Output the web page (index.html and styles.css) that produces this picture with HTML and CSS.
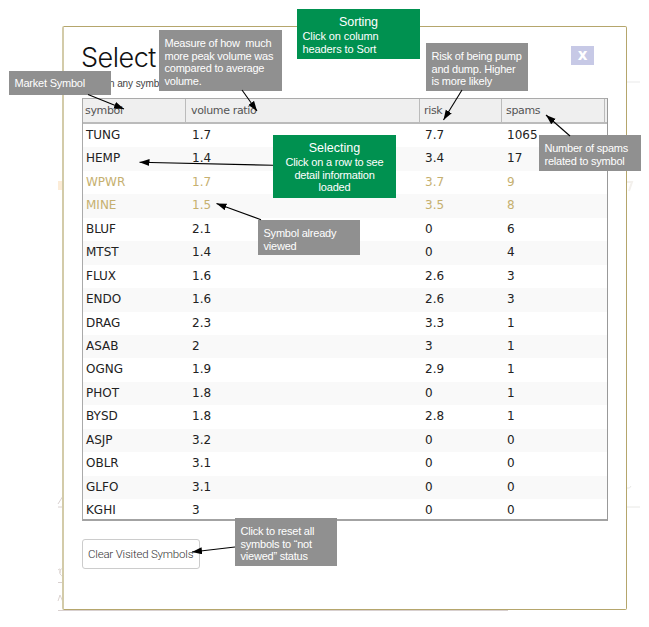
FILE: index.html
```html
<!DOCTYPE html>
<html lang="en">
<head>
<meta charset="utf-8">
<title>Select Symbol</title>
<link rel="stylesheet" href="styles.css">
</head>
<body>
<svg class="backdrop" width="649" height="627" viewBox="0 0 649 627" aria-hidden="true">
  <path d="M627 82H640" stroke="#f4f4f4" stroke-width="2"/>
  <path d="M58 181H63V190H58Z" fill="#fcecd7"/>
  <path d="M627 182H632L629 191" fill="none" stroke="#f3f0ec" stroke-width="2"/>
  <path d="M58 504L63 496M58 507H63M58 582.5H63M58 610.5H508" fill="none" stroke="#d8d0cf"/>
  <path d="M58 570Q61 567 60 573M63 569Q59 568 60 574Q62 577 63 575M58 601L60 595L63 602" fill="none" stroke="#ddd5d2"/>
  <path d="M627 488Q630 489 631 486M627 507H640" fill="none" stroke="#e8e8e5"/>
</svg>
<main class="dialog">
  <header class="dialog-head">
    <h1>Select</h1>
    <button class="close" aria-label="Close">x</button>
  </header>
  <p class="hint">n any symbo</p>
  <section class="table">
    <div class="row head"><span>symbol</span><span>volume ratio</span><span>risk</span><span>spams</span><span></span></div>
    <div class="row"><span>TUNG</span><span>1.7</span><span>7.7</span><span>1065</span></div>
    <div class="row"><span>HEMP</span><span>1.4</span><span>3.4</span><span>17</span></div>
    <div class="row seen"><span>WPWR</span><span>1.7</span><span>3.7</span><span>9</span></div>
    <div class="row seen"><span>MINE</span><span>1.5</span><span>3.5</span><span>8</span></div>
    <div class="row"><span>BLUF</span><span>2.1</span><span>0</span><span>6</span></div>
    <div class="row"><span>MTST</span><span>1.4</span><span>0</span><span>4</span></div>
    <div class="row"><span>FLUX</span><span>1.6</span><span>2.6</span><span>3</span></div>
    <div class="row"><span>ENDO</span><span>1.6</span><span>2.6</span><span>3</span></div>
    <div class="row"><span>DRAG</span><span>2.3</span><span>3.3</span><span>1</span></div>
    <div class="row"><span>ASAB</span><span>2</span><span>3</span><span>1</span></div>
    <div class="row"><span>OGNG</span><span>1.9</span><span>2.9</span><span>1</span></div>
    <div class="row"><span>PHOT</span><span>1.8</span><span>0</span><span>1</span></div>
    <div class="row"><span>BYSD</span><span>1.8</span><span>2.8</span><span>1</span></div>
    <div class="row"><span>ASJP</span><span>3.2</span><span>0</span><span>0</span></div>
    <div class="row"><span>OBLR</span><span>3.1</span><span>0</span><span>0</span></div>
    <div class="row"><span>GLFO</span><span>3.1</span><span>0</span><span>0</span></div>
    <div class="row"><span>KGHI</span><span>3</span><span>0</span><span>0</span></div>
  </section>
  <button class="clear">Clear Visited Symbols</button>
</main>

<aside class="note n-market">Market Symbol</aside>
<aside class="note n-volume">Measure of how&nbsp; much<br>more peak volume was<br>compared to average<br>volume.</aside>
<aside class="note n-risk">Risk of being pump<br>and dump. Higher<br>is more likely</aside>
<aside class="note n-spams">Number of spams<br>related to symbol</aside>
<aside class="note n-viewed">Symbol already<br>viewed</aside>
<aside class="note n-reset">Click to reset all<br>symbols to “not<br>viewed” status</aside>
<aside class="note green n-sort"><h2>Sorting</h2>Click on column<br>headers to Sort</aside>
<aside class="note green n-select"><h2>Selecting</h2>Click on a row to see<br>detail information<br>loaded</aside>

<svg class="arrows" width="649" height="627" viewBox="0 0 649 627" aria-hidden="true">
  <defs>
    <marker id="tip" markerUnits="userSpaceOnUse" markerWidth="11" markerHeight="8" refX="10" refY="3.5" orient="auto">
      <path d="M0 0L10 3.5L0 7Z"/>
    </marker>
  </defs>
  <g fill="none" stroke="#000" stroke-width="1.1">
    <path d="M88 94.5L124 109" marker-end="url(#tip)"/>
    <path d="M242 90L257 111" marker-end="url(#tip)"/>
    <path d="M462 90L443.5 120" marker-end="url(#tip)"/>
    <path d="M570 136L546 115" marker-end="url(#tip)"/>
    <path d="M273 165.3L139.5 162.3" marker-end="url(#tip)"/>
    <path d="M261 219.7L216.5 203.5" marker-end="url(#tip)"/>
    <path d="M235 547L192 552" marker-end="url(#tip)"/>
  </g>
</svg>
</body>
</html>
```
FILE: styles.css
```css
* { box-sizing: border-box; }
body {
  margin: 0;
  width: 649px;
  height: 627px;
  overflow: hidden;
  background: #fff;
  font-family: "Liberation Sans", Arial, sans-serif;
}
.backdrop, .arrows { position: absolute; top: 0; left: 0; }
.arrows { pointer-events: none; }
.dialog {
  position: relative;
  width: 565px;
  height: 584px;
  margin: 26px 0 0 62px;
  padding: 14px 18px 0 19px;
  background: #fff;
  border: 1px solid #b5a66c;
  border-left: 2px solid #d3cba9;
  border-radius: 2px;
}
.dialog-head { display: flex; justify-content: space-between; height: 35px; padding-right: 14px; }
h1 {
  margin: 0 0 0 -2px;
  font: 300 27px/33px Inter, sans-serif;
  letter-spacing: -0.5px;
  color: #111;
}
.close {
  width: 23px;
  height: 19px;
  margin-top: 5px;
  padding: 0 0 2px;
  border: 0;
  background: #c7c9e6;
  color: #fff;
  font: bold 15px/16px "DejaVu Sans", sans-serif;
}
.hint { margin: 0; padding-left: 26px; height: 22px; font: 400 10px/15px "Liberation Sans", sans-serif; letter-spacing: -0.1px; color: #444; }
.table {
  width: 526px;
  height: 423px;
  margin-left: -1px;
  overflow: hidden;
  border: 1px solid #aaa;
  border-right: 1px solid #999;
  border-bottom: 2px solid #a3a3a3;
  font: 12px/23.45px "DejaVu Sans", Verdana, sans-serif;
  color: #222;
}
.row { display: grid; grid-template-columns: 103px 233px 82px 106px; height: 23.45px; }
.row span { padding-left: 3px; }
.row span:nth-child(2) { padding-left: 6px; }
.row span:nth-child(3), .row span:nth-child(4) { padding-left: 6px; }
.row:nth-child(odd) { background: #f9f9f9; }
.seen { color: #c6b06f; }
.row.head {
  grid-template-columns: 103px 234px 82px 103px 2px;
  height: 25px;
  background: #efefef;
  border-bottom: 2px solid #bbb;
  font-size: 11px;
  line-height: 24px;
  letter-spacing: -0.35px;
  color: #555;
}
.row.head span { border-right: 1px solid #bbb; padding-left: 2px; }
.row.head span:nth-child(2) { padding-left: 5px; }
.row.head span:nth-child(n+3) { padding-left: 4px; }
.row.head span:last-child { padding: 0; border: 0; }
.clear {
  display: block;
  width: 118px;
  height: 30px;
  margin: 18px 0 0 -1px;
  padding: 0 0 1px 5px;
  border: 1px solid #ccc;
  border-radius: 3px;
  background: #fff;
  color: #333;
  font: 300 11.5px/26px Roboto, sans-serif;
  letter-spacing: -0.2px;
  text-align: left;
  white-space: nowrap;
}
.note {
  position: absolute;
  width: 102px;
  padding: 7px 0 0 5.5px;
  background: #909090;
  color: #fff;
  font-size: 11px;
  line-height: 12.6px;
  letter-spacing: -0.22px;
  white-space: nowrap;
}
.n-market { left: 9px; top: 71px; height: 24px; padding-top: 6px; }
.n-volume { left: 159px; top: 30px; width: 123px; height: 61px; }
.n-risk { left: 426px; top: 43px; height: 48px; }
.n-spams { left: 539px; top: 135px; height: 36px; }
.n-viewed { left: 258px; top: 220px; height: 35px; }
.n-reset { left: 235px; top: 518px; height: 48px; }
.green { width: 123px; padding-top: 5px; background: #009150; letter-spacing: -0.1px; }
.green h2 { margin: 0 0 0 -5.5px; font-size: 12.5px; font-weight: 400; line-height: 16px; text-align: center; }
.n-sort { left: 297px; top: 9px; height: 50px; }
.n-select { left: 273px; top: 135px; height: 63px; padding-left: 0; text-align: center; letter-spacing: -0.2px; }
.n-select h2 { margin-left: 0; letter-spacing: 0; }
```
